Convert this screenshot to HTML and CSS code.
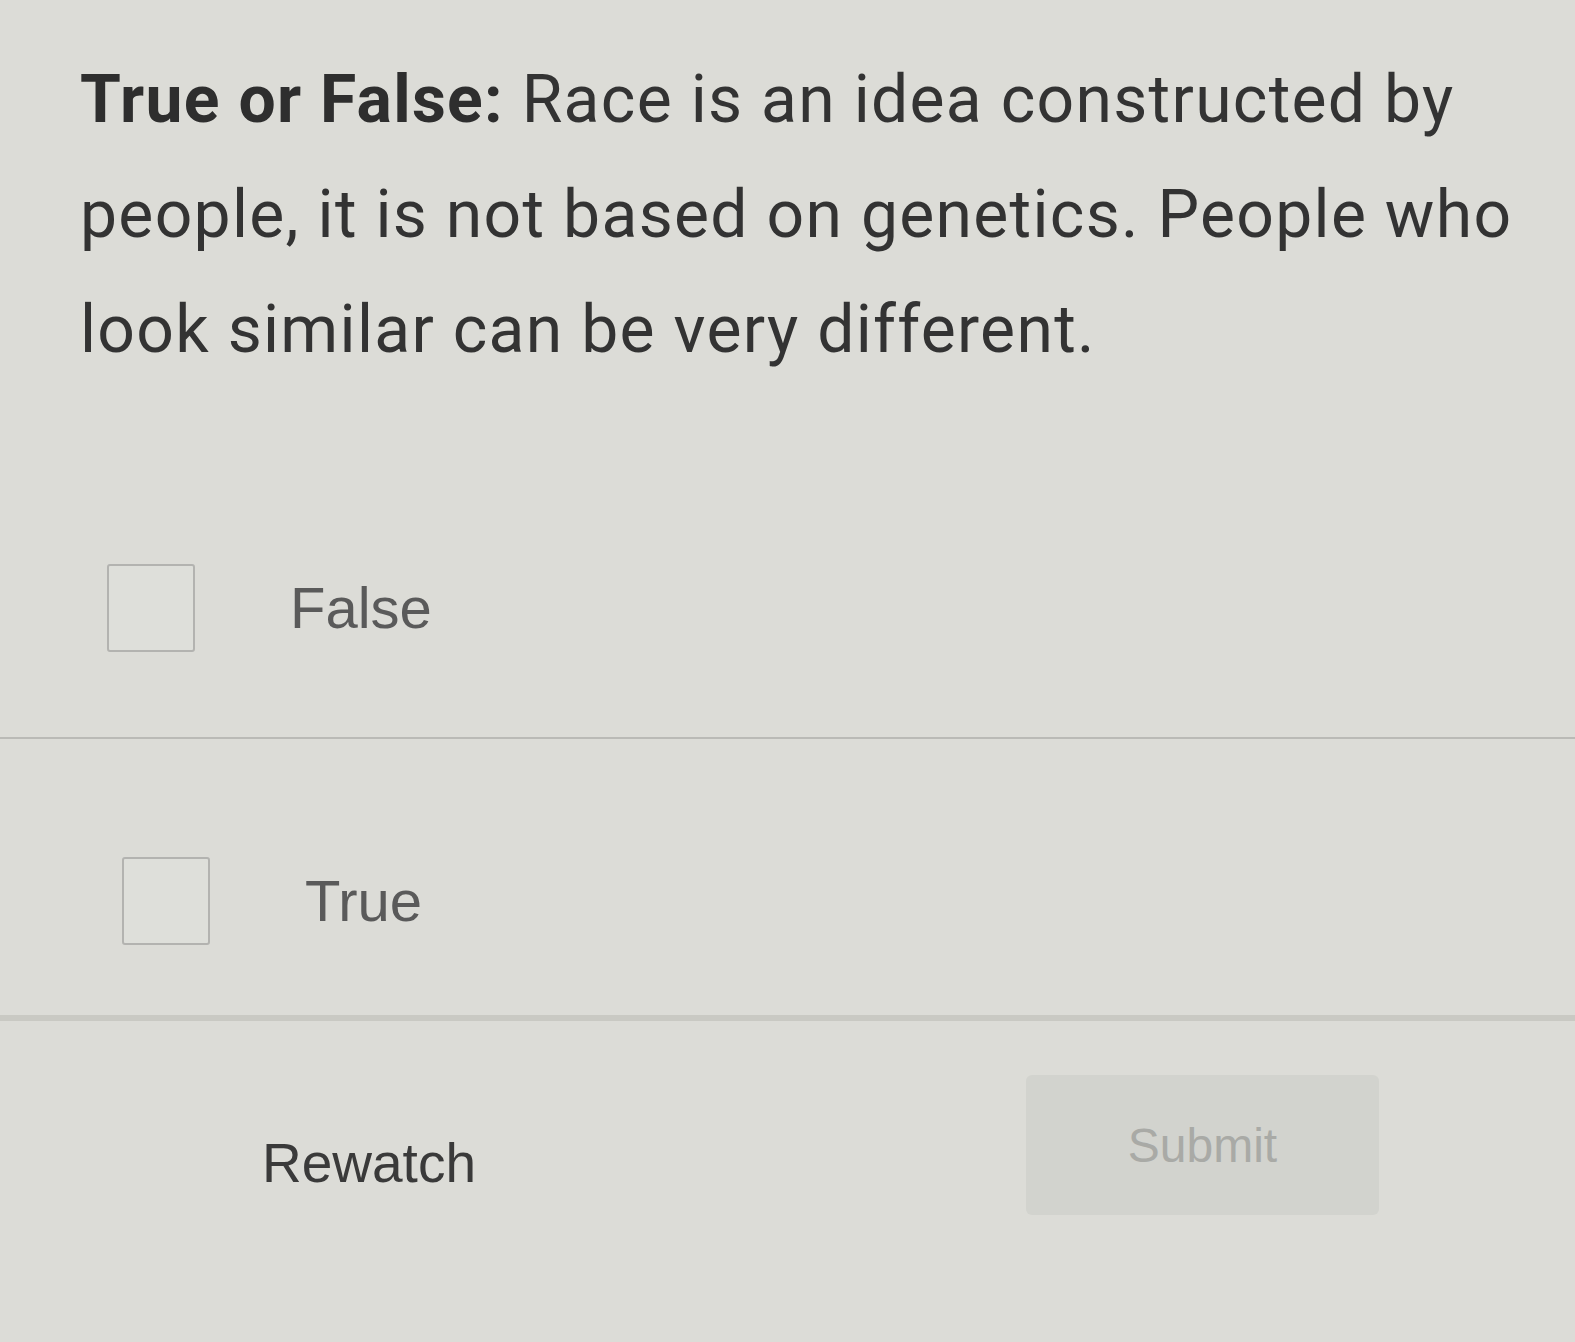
FILE: index.html
```html
<!DOCTYPE html>
<html>
<head>
<meta charset="utf-8">
<link rel="stylesheet" href="styles.css">
</head>
<body>
<div class="page">
  <div class="question">
    <p class="prompt"><strong>True or False:</strong> Race is an idea constructed by people, it is not based on genetics. People who look similar can be very different.</p>
  </div>
  <div class="options">
    <label class="option first">
      <span class="box"></span>
      <span class="label">False</span>
    </label>
    <label class="option second">
      <span class="box"></span>
      <span class="label">True</span>
    </label>
  </div>
  <div class="actions">
    <button class="rewatch">Rewatch</button>
    <button class="submit" disabled>Submit</button>
  </div>
</div>
</body>
</html>
```

FILE: styles.css
```css
html, body {
  margin: 0;
  padding: 0;
}
body {
  background: #dcdcd7;
  font-family: "DejaVu Sans", "Liberation Sans", sans-serif;
  color: #343434;
  width: 1575px;
  height: 1342px;
  overflow: hidden;
}
.page {
  display: flex;
  flex-direction: column;
  height: 100%;
}
.question {
  padding: 42px 30px 0 80px;
}
.prompt {
  margin: 0;
  font-family: Roboto, "DejaVu Sans", sans-serif;
  font-size: 66px;
  line-height: 115px;
  letter-spacing: 1.3px;
  color: #333333;
}
.prompt strong {
  font-weight: bold;
  color: #2e2e2e;
}
.options {
  margin-top: 177px;
  display: flex;
  flex-direction: column;
}
.option {
  display: flex;
  align-items: flex-start;
  box-sizing: border-box;
  border-bottom: 2px solid #babab6;
}
.option.first {
  height: 175px;
  padding-left: 107px;
}
.option.second {
  height: 282px;
  padding-left: 122px;
  padding-top: 118px;
  border-bottom-color: #c9c9c3;
  border-bottom-width: 6px;
}
.box {
  width: 88px;
  height: 88px;
  border: 2px solid #b3b3b0;
  border-radius: 3px;
  box-sizing: border-box;
  background: #dedfda;
}
.label {
  margin-left: 95px;
  font-family: "Liberation Sans", Arial, sans-serif;
  font-size: 58px;
  color: #5a5a5a;
  line-height: 88px;
}
.actions {
  display: flex;
  align-items: flex-start;
  padding-top: 54px;
}
.rewatch {
  margin-left: 262px;
  margin-top: 61px;
  border: 0;
  background: transparent;
  padding: 0;
  font-family: "Liberation Sans", Arial, sans-serif;
  font-size: 55px;
  color: #3a3a3a;
  line-height: 1;
}
.submit {
  margin-left: 550px;
  width: 353px;
  height: 140px;
  border: 0;
  border-radius: 6px;
  background: #d2d3ce;
  font-family: "Liberation Sans", Arial, sans-serif;
  font-size: 48px;
  color: #a9aaa6;
  padding: 0;
}
```
